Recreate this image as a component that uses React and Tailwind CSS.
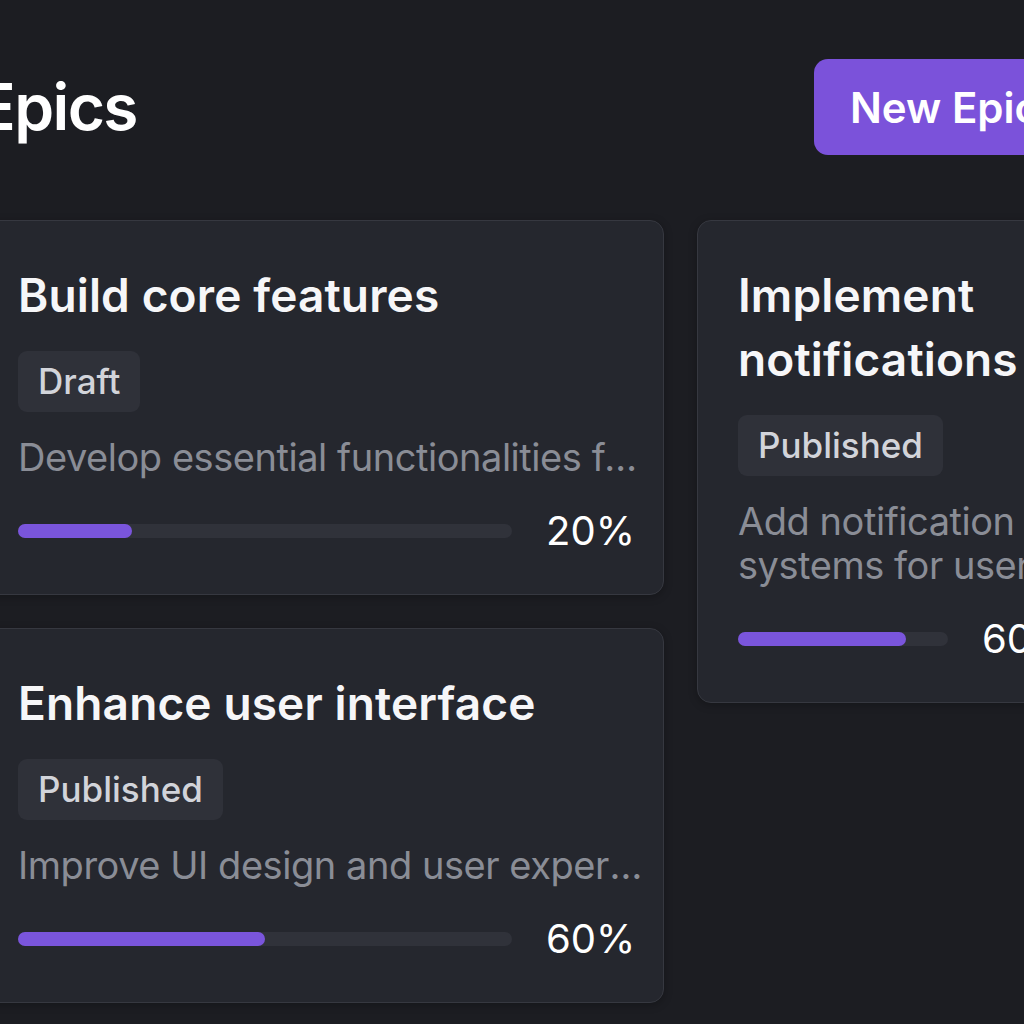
import React from "react";

const leftCards = [
  {
    title: "Build core features",
    status: "Draft",
    desc: "Develop essential functionalities for the application",
    pct: "20%",
    fill: "w-[23%]",
    clamp: false,
  },
  {
    title: "Enhance user interface",
    status: "Published",
    desc: "Improve UI design and user experience across the app",
    pct: "60%",
    fill: "w-[50%]",
    clamp: false,
  },
];

function Card({ card, className }) {
  return (
    <div
      className={
        "rounded-[14px] border border-[#363840] bg-[#25272e] pl-[40px] pr-[16px] pt-[42px] pb-[39px] shadow-[0_2px_8px_rgba(0,0,0,0.25)] " +
        className
      }
    >
      <h2 className="text-[46px] leading-[64px] font-semibold text-[#f6f6f8] tracking-[0.003em]">
        {card.title}
      </h2>
      <div className="mt-[24px] flex">
        <span className="flex h-[61px] items-center rounded-[9px] bg-[#2f3139] px-[20px] text-[35px] font-medium text-[#d2d4da]">
          {card.status}
        </span>
      </div>
      <p
        className={
          "mt-[23px] text-[38px] leading-[44px] font-normal text-[#8a8d96] tracking-[-0.012em] " +
          (card.clamp ? "line-clamp-2" : "truncate")
        }
      >
        {card.desc}
      </p>
      <div className="mt-[28px] flex h-[48px] items-center pr-[19px]">
        <div className="h-[14px] flex-1 rounded-full bg-[#30323a]">
          <div className={"h-full rounded-full bg-[#7a55dc] " + card.fill}></div>
        </div>
        <span className="ml-[34px] w-[82px] text-[40px] leading-[48px] font-normal text-white whitespace-nowrap">
          {card.pct}
        </span>
      </div>
    </div>
  );
}

export default function App() {
  return (
    <div className="w-[1024px] h-[1024px] overflow-hidden bg-[#1c1d22] font-['Inter',sans-serif]">
      <div className="ml-[-23px] pt-[59px] w-[1500px]">
        <header className="flex w-[1098px] items-center justify-between">
          <h1 className="text-[64px] leading-[80px] font-semibold tracking-tight text-white">
            Epics
          </h1>
          <button className="h-[96px] rounded-[14px] bg-[#7b52da] px-[36px] text-[42px] font-semibold text-white whitespace-nowrap">
            New Epic
          </button>
        </header>
        <div className="mt-[65px] flex items-start gap-[33px]">
          <div className="flex w-[687px] flex-col gap-[33px]">
            {leftCards.map((c) => (
              <Card key={c.title} card={c} className="w-[687px]" />
            ))}
          </div>
          <Card
            className="w-[403px]"
            card={{
              title: "Implement notifications",
              status: "Published",
              desc: "Add notification systems for user engagement and alerts",
              pct: "60%",
              fill: "w-[80%]",
              clamp: true,
            }}
          />
        </div>
      </div>
    </div>
  );
}
